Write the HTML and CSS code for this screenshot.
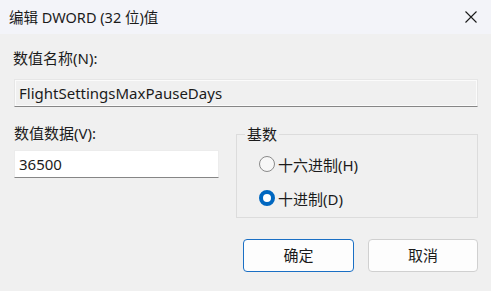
FILE: index.html
```html
<!DOCTYPE html>
<html lang="zh-CN">
<head>
    <meta charset="UTF-8">
    <title>编辑 DWORD (32 位)值</title>
    <link rel="stylesheet" href="styles.css">
</head>
<body>
    <div class="dialog">
        <div class="titlebar">
            <span class="title">编辑 DWORD (32 位)值</span>
            <span class="close">
                <svg width="12" height="12" viewBox="0 0 12 12"><path d="M0.5 0.5 L11.5 11.5 M11.5 0.5 L0.5 11.5" stroke="#1a1a1a" stroke-width="1.1" fill="none"/></svg>
            </span>
        </div>
        <div class="content">
            <div class="label">数值名称(N):</div>
            <div class="field readonly">FlightSettingsMaxPauseDays</div>

            <div class="row">
                <div class="left">
                    <div class="label">数值数据(V):</div>
                    <div class="field data">36500</div>
                </div>
                <fieldset class="base">
                    <legend>基数</legend>
                    <div class="radio"><span class="dot"></span>十六进制(H)</div>
                    <div class="radio"><span class="dot on"></span>十进制(D)</div>
                </fieldset>
            </div>

            <div class="buttons">
                <span class="btn primary">确定</span>
                <span class="btn">取消</span>
            </div>
        </div>
    </div>
</body>
</html>
```

FILE: styles.css
```css
* {
    box-sizing: border-box;
}
body {
    margin: 0;
    background: #f0f0f0;
    font-family: "Noto Sans", "Noto Sans CJK SC", sans-serif;
    font-size: 15px;
    color: #1b1b1b;
}
.dialog {
    width: 491px;
    height: 291px;
}
.titlebar {
    height: 34px;
    background: #f3f4f9;
    display: flex;
    align-items: center;
    justify-content: space-between;
    padding: 0 14px 2px 9px;
}
.title {
    font-size: 14.5px;
}
.close {
    display: flex;
    margin-top: 2px;
}
.content {
    padding: 14px 13px 0 13px;
}
.label {
    height: 20px;
    line-height: 20px;
}
.field {
    height: 28px;
    line-height: 26px;
    padding: 0 4px;
    border: 1px solid #e6e6e6;
    border-bottom: 1px solid #868686;
}
.readonly {
    margin-top: 11px;
    margin-left: 1px;
    background: #f0f0f0;
    box-shadow: inset 0 0 0 1px #fbfbfb;
}
.row {
    display: flex;
    margin-top: 16px;
}
.left {
    width: 206px;
    padding-left: 1px;
}
.data {
    margin-top: 7px;
    background: #fff;
    border-color: #ececec;
    border-bottom-color: #868686;
}
.base {
    margin: 3px 0 0 17px;
    padding: 12px 0 0 22px;
    width: 242px;
    height: 92px;
    border: 1px solid #dcdcdc;
}
.base legend {
    padding: 0 2px;
    margin-left: -14px;
    line-height: 16px;
}
.radio {
    display: flex;
    align-items: center;
    height: 20px;
    margin-bottom: 14px;
}
.dot {
    width: 16px;
    height: 16px;
    border-radius: 50%;
    border: 1px solid #8a8a8a;
    background: #f7f7f7;
    margin-right: 3px;
}
.dot.on {
    border: 4.5px solid #0067c0;
    background: #fff;
}
.buttons {
    display: flex;
    justify-content: flex-end;
    gap: 14px;
    margin-top: 21px;
}
.btn {
    width: 110px;
    height: 33px;
    line-height: 31px;
    text-align: center;
    background: #fdfdfd;
    border: 1px solid #d0d0d0;
    border-radius: 4px;
}
.btn.primary {
    width: 111px;
    border-color: #1a6fc4;
}
```
